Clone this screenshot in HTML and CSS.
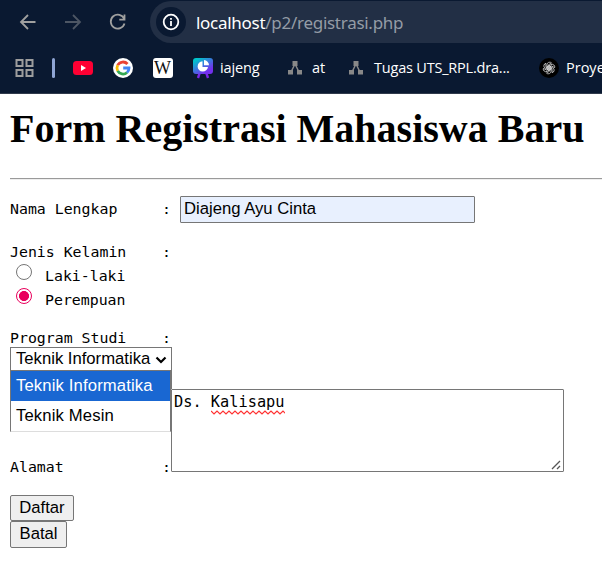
FILE: index.html
```html
<!DOCTYPE html>
<html lang="id">
<head>
<meta charset="utf-8">
<title>Form Registrasi</title>
<link rel="stylesheet" href="styles.css">
</head>
<body>
<header class="chrome">
  <div class="toolbar">
    <svg class="nav-icon" viewBox="0 0 18 18"><path d="M16.500 9H2.500M9 2L2 9l7 7"/></svg>
    <svg class="nav-icon dim" viewBox="0 0 18 18"><path d="M1 9h14.500M9 2l7 7-7 7"/></svg>
    <svg class="nav-icon" viewBox="0 0 18 18"><path d="M15.200 5.800A7 7 0 1 0 15.500 10.500M15.500 1.500v5.200h-5.200"/></svg>
    <div class="address">
      <span class="info"><svg width="18" height="18" viewBox="0 0 18 18"><circle cx="9" cy="9" r="7.300"/><path d="M9 8v5M9 5v1.800"/></svg></span>
      <span class="url"><b>localhost</b>/p2/registrasi.php</span>
    </div>
  </div>
  <nav class="bookmarks">
    <svg class="apps" width="18" height="18" viewBox="0 0 18 18"><path d="M1 1h6v6H1zM11 1h6v6h-6zM1 11h6v6H1zM11 11h6v6h-6z"/></svg>
    <i class="separator"></i>
    <svg class="youtube" width="20" height="20" viewBox="0 0 20 20"><rect y="3" width="20" height="14" rx="3.500" fill="#ff0033"/><path d="M8 7l5 3-5 3z" fill="#fff"/></svg>
    <svg class="google" width="20" height="20" viewBox="0 0 20 20"><circle cx="10" cy="10" r="10" fill="#fff"/><g fill="none" stroke-width="2.800"><path d="M4.700 7.200A6 6 0 0 1 14.500 6" stroke="#ea4335"/><path d="M4.700 12.800a6 6 0 0 1 0-5.600" stroke="#fbbc05"/><path d="M14 14.500a6 6 0 0 1-9.300-1.700" stroke="#34a853"/><path d="M10.200 10H16a6 6 0 0 1-2 4.500" stroke="#4285f4"/></g></svg>
    <span class="wiki">W</span>
    <svg class="board" width="20" height="20" viewBox="0 0 20 20"><defs><linearGradient id="board-fill" x1="0" y1="0" x2=".8" y2="1"><stop offset=".15" stop-color="#00c4cc"/><stop offset=".85" stop-color="#7330ee"/></linearGradient></defs><path d="M7 14l-2 6M13 14l2 6" stroke="#7a25e8" stroke-width="2.400"/><rect width="20" height="16" rx="3" fill="url(#board-fill)"/><path d="M9.500 3.200A5.200 5.200 0 1 0 15 9H9.500z" fill="#fff"/><path d="M11 2a5.200 5.200 0 0 1 5 5.300h-5z" fill="#fff"/></svg>
    <span class="label-iajeng">iajeng</span>
    <svg class="tree" width="16" height="16" viewBox="0 0 16 16"><path d="M8 4L4 12M8 4l4 8"/><path class="nodes" d="M5.500 1h5v5h-5zM1 10h5v4.500H1zM10 10h5v4.500h-5z"/></svg>
    <span class="label-at">at</span>
    <svg class="tree" width="16" height="16" viewBox="0 0 16 16"><path d="M8 4L4 12M8 4l4 8"/><path class="nodes" d="M5.500 1h5v5h-5zM1 10h5v4.500H1zM10 10h5v4.500h-5z"/></svg>
    <span class="label-tugas">Tugas UTS_RPL.dra...</span>
    <svg class="knot" width="20" height="20" viewBox="0 0 20 20"><circle cx="10" cy="10" r="10" fill="#000"/><g fill="none" stroke="#ddd" stroke-width=".8" transform="translate(1 1) scale(.9)"><path id="lobe" d="M10 12.400L7.800 11V6.200a2.900 2.900 0 0 1 5-1.800L9.200 6.600v4"/><use href="#lobe" transform="rotate(60 10 10)"/><use href="#lobe" transform="rotate(120 10 10)"/><use href="#lobe" transform="rotate(180 10 10)"/><use href="#lobe" transform="rotate(240 10 10)"/><use href="#lobe" transform="rotate(300 10 10)"/></g></svg>
    <span class="label-proye">Proye</span>
  </nav>
</header>
<main>
  <h1>Form Registrasi Mahasiswa Baru</h1>
  <hr>
  <form>
    <div class="row name-row"><label>Nama Lengkap</label><span class="colon">:</span><input class="name" type="text" value="Diajeng Ayu Cinta"></div>
    <div class="row gender-row"><label>Jenis Kelamin</label><span class="colon">:</span></div>
    <label class="choice"><i class="radio"></i><span>Laki-laki</span></label>
    <label class="choice"><i class="radio checked"></i><span>Perempuan</span></label>
    <div class="row program-row"><label>Program Studi</label><span class="colon">:</span></div>
    <div class="select">Teknik Informatika
      <svg width="12" height="8" viewBox="0 0 12 8"><path d="M1.500 1.500L6 6l4.500-4.500"/></svg>
      <div class="menu"><div class="option selected">Teknik Informatika</div><div class="option">Teknik Mesin</div></div>
    </div>
    <div class="row address-row"><label>Alamat</label><span class="colon">:</span>
      <div class="textarea">Ds. <span class="misspelled">Kalisapu<svg width="74" height="5" viewBox="0 0 74 5"><path d="M0 1l3 3 3-3 3 3 3-3 3 3 3-3 3 3 3-3 3 3 3-3 3 3 3-3 3 3 3-3 3 3 3-3 3 3 3-3 3 3 3-3 3 3 3-3 3 3 3-3 3 3"/></svg></span>
        <svg class="grip" width="10" height="10" viewBox="0 0 10 10"><path d="M1 9l8-8M6 9l3-3"/></svg>
      </div>
    </div>
    <div class="buttons"><button class="submit" type="button">Daftar</button><button class="reset" type="button">Batal</button></div>
  </form>
</main>
</body>
</html>
```
FILE: styles.css
```css
* { box-sizing: border-box; }
body { margin: 0; background: #fff; color: #000; overflow: hidden; height: 563px; }
svg { display: block; flex: none; fill: none; overflow: visible; }

.chrome { height: 94px; background: #0a1931; border-bottom: 1px solid #303a4b; font-family: "Open Sans", "Noto Sans", sans-serif; overflow: hidden; }
.toolbar { display: flex; align-items: center; height: 43px; padding: 1px 0 0 19px; }
.nav-icon { width: 18px; height: 18px; margin-right: 27px; stroke: #a0a09f; stroke-width: 1.8; }
.nav-icon.dim { stroke: #4d5664; }
.nav-icon:nth-child(3) { margin-right: 23px; }
.address { display: flex; align-items: center; flex: none; width: 480px; height: 42px; padding-left: 6px; border-radius: 21px; background: #222f45; }
.info { display: flex; align-items: center; justify-content: center; width: 30px; height: 30px; border-radius: 50%; background: #0a1931; }
.info svg { stroke: #fff; stroke-width: 1.8; }
.url { margin-left: 10px; padding-top: 1px; font: 17px "Noto Sans", sans-serif; letter-spacing: -.28px; color: #949ca6; white-space: nowrap; }
.url b { font-weight: 400; color: #fff; }

.bookmarks { display: flex; align-items: center; height: 50px; padding-left: 15px; color: #fff; font-size: 14.5px; white-space: nowrap; }
.bookmarks > * { flex: none; }
.bookmarks [class^="label"] { margin-top: -2px; }
.apps { width: 19px; stroke: #9d9d9d; stroke-width: 2; }
.separator { width: 3px; height: 20px; margin: 0 18px; border-radius: 2px; background: #8fa5d4; }
.google { margin-left: 20px; }
.wiki { width: 20px; height: 20px; margin: 0 20px; border-radius: 3px; background: #fff; color: #111; font: 18px/21px "Liberation Serif", serif; text-align: center; text-indent: -1px; }
.label-iajeng { width: 74px; padding-left: 7px; letter-spacing: -.15px; }
.tree { stroke: #888; stroke-width: 1.5; }
.tree .nodes { fill: #888; stroke: none; }
.label-at { width: 45px; padding-left: 9px; }
.label-tugas { width: 175px; padding-left: 10px; letter-spacing: -.2px; }
.label-proye { padding-left: 7px; }

main { padding: 14px 0 0 10px; }
h1 { margin: 0; height: 70px; font: bold 40px/41px "Liberation Serif", serif; white-space: nowrap; }
hr { height: 2px; margin: 0 0 16px; border: 0; border-top: 1px solid #9a9a9a; border-bottom: 1px solid #eee; }
form { font: 14.86px/24px "DejaVu Sans Mono", monospace; }
.row { display: flex; white-space: pre; }
.row > label { width: 152px; }
.colon { width: 9px; }
.name-row { height: 44px; line-height: 27px; }
.name { width: 295px; height: 27px; margin-left: 9px; padding: 0 3px 2px; border: 1px solid #767676; border-radius: 1px; background: #e8f0fe; font: 16.67px "Liberation Sans", sans-serif; }
.gender-row { height: 20px; }
.choice { display: flex; height: 24px; line-height: 33px; }
.radio { width: 16px; height: 16px; margin: 4px 13px 0 6px; border: 1.5px solid #767676; border-radius: 50%; }
.radio.checked { border-color: #e9005c; background: radial-gradient(circle, #e9005c 0 4.7px, #fff 5.3px); }
.program-row { height: 39px; line-height: 60px; }
.select { position: relative; width: 162px; height: 42px; padding-left: 5px; border: 1px solid #767676; border-bottom: 0; font: 16.67px/22px "Liberation Sans", sans-serif; white-space: nowrap; }
.select > svg { position: absolute; right: 4px; top: 8px; stroke: #000; stroke-width: 2.2; }
.menu { position: absolute; z-index: 2; left: -1px; top: 22px; width: 161px; height: 62px; border: 1px solid #767676; border-bottom-color: #ddd; background: #fff; }
.option { height: 30px; padding-left: 5px; line-height: 29px; letter-spacing: .14px; }
.option.selected { background: #1967d2; color: #fff; }
.address-row { height: 106px; }
.address-row > label, .address-row > .colon { padding-top: 66px; }
.textarea { position: relative; width: 393px; height: 83px; padding: 1px 2px; border: 1px solid #767676; border-radius: 1px; font-size: 15.3px; line-height: 23px; }
.misspelled { position: relative; }
.misspelled svg { position: absolute; left: 0; top: 17px; overflow: hidden; stroke: #f33; stroke-width: 1.2; }
.grip { position: absolute; right: 2px; bottom: 1px; stroke: #555; stroke-width: 1.3; }
.buttons { display: flex; flex-direction: column; align-items: flex-start; }
button { height: 26px; padding: 0 0 1px; border: 1px solid #767676; border-radius: 2px; background: #efefef; font: 16.67px "Liberation Sans", sans-serif; }
.submit { width: 64px; }
.reset { width: 57px; height: 27px; }
```
